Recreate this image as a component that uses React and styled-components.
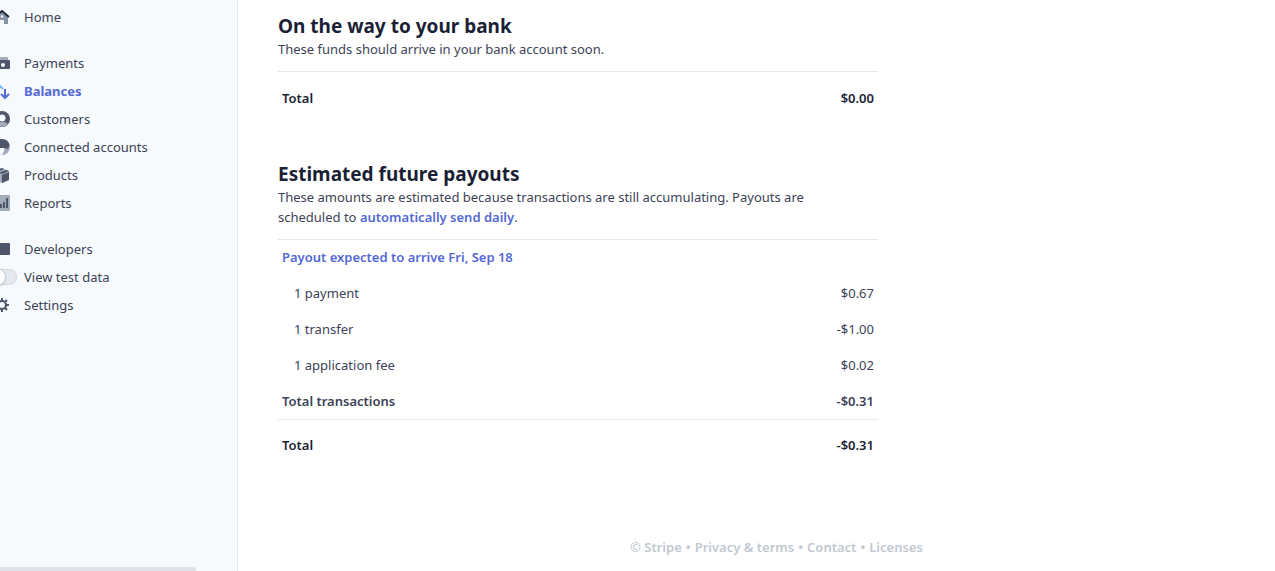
import React from "react";
import styled, { createGlobalStyle } from "styled-components";

const GlobalStyle = createGlobalStyle`
  *, *::before, *::after { box-sizing: border-box; }
  body {
    margin: 0;
    background: #fff;
    color: #3c4257;
    font: 400 13px/20px "Segoe UI", "Noto Sans", "Open Sans", sans-serif;
  }
`;

const Page = styled.div`
  display: flex;
  min-height: 100vh;
  overflow: hidden;
`;

const Sidebar = styled.aside`
  flex: 0 0 238px;
  padding: 3px 0;
  overflow: hidden;
  background: #f7fafc;
  border-right: 1px solid #e3e8ee;
`;

const NavGroup = styled.ul`
  list-style: none;
  margin: 0 0 18px -6px;
  padding: 0;
`;

const NavLink = styled.a`
  display: flex;
  align-items: center;
  gap: 14px;
  height: 28px;
  color: ${(p) => (p.$active ? "#5469d4" : "#3c4257")};
  font-weight: ${(p) => (p.$active ? 700 : 400)};
  text-decoration: none;
`;

const NavToggle = styled.label`
  display: flex;
  align-items: center;
  gap: 7px;
  height: 28px;
  cursor: pointer;
`;

const Switch = styled.input`
  appearance: none;
  display: flex;
  width: 28px;
  height: 16px;
  margin: 0 0 0 -5px;
  border-radius: 8px;
  background: #e3e8ee;
  box-shadow: inset 0 0 0 1px #d5dbe1;
  &::before {
    content: "";
    width: 16px;
    height: 16px;
    border-radius: 50%;
    background: #fff;
    box-shadow: 0 0 0 1px #c1c9d2, 0 2px 3px rgba(60, 66, 87, 0.15);
  }
  &:checked { justify-content: flex-end; background: #5469d4; }
`;

const Icon = styled.svg`
  flex: none;
  width: 16px;
  height: 16px;
`;

const Main = styled.main`
  flex: 1;
  min-width: 0;
  padding: 13px 0 14px 40px;
`;

const Section = styled.section`
  max-width: 600px;
  margin-bottom: 37px;
`;

const Title = styled.h2`
  margin: 0;
  color: #1a1f36;
  font-size: 19px;
  font-weight: 700;
  line-height: 26px;
`;

const Description = styled.p`
  max-width: 560px;
  margin: 0 0 12px;
`;

const TextLink = styled.a`
  color: #5469d4;
  font-weight: 600;
  text-decoration: none;
`;

const Table = styled.table`
  width: 100%;
  border-collapse: collapse;
`;

const Row = styled.tr`
  height: ${(p) => (p.$total ? 52 : 36)}px;
  border-top: ${(p) => (p.$ruled ? "1px solid #e3e8ee" : "0")};
  color: ${(p) => (p.$total ? "#1a1f36" : "#3c4257")};
`;

const Label = styled.th`
  padding: 0 4px 0 ${(p) => (p.$nested ? 16 : 4)}px;
  font-weight: ${(p) => (p.$nested ? 400 : 600)};
  text-align: left;
`;

const Amount = styled.td`
  padding: 0 4px;
  font-weight: ${(p) => (p.$strong ? 600 : 400)};
  text-align: right;
`;

const Footer = styled.footer`
  display: flex;
  flex-wrap: wrap;
  justify-content: center;
  gap: 4px;
  margin-top: 66px;
  color: #c1c9d2;
  font-weight: 600;
`;

const FooterLink = styled.a`
  color: inherit;
  text-decoration: none;
`;

const StatusBar = styled.div`
  position: fixed;
  left: 0;
  bottom: 0;
  width: 196px;
  height: 4px;
  border-radius: 0 4px 0 0;
  background: #dee1e6;
`;

const DARK = "#4f566b";
const LIGHT = "#a3acb9";
const PALE = "#f7fafc";

const drawings = {
  home: (
    <>
      <path d="M2 8 8 3l6 5v7h-4v-4H6v4H2z" fill="#8792a2" />
      <circle cx="8" cy="7.500" r="1.200" fill={PALE} />
      <path d="M1 8 8 2l7 6" fill="none" stroke="#1a1f36" strokeWidth="1.800" />
    </>
  ),
  payments: (
    <>
      <path d="M0 3a1 1 0 0 1 1-1h12a1 1 0 0 1 1 1v2H0z" fill={LIGHT} />
      <rect x="2" y="5" width="14" height="9" rx="1" fill={DARK} />
      <circle cx="9" cy="10" r="2" fill={PALE} />
    </>
  ),
  balances: (
    <g fill="none" strokeWidth="2">
      <path d="M5 11V2M1 6l4-4 4 4" stroke="#7fb5fb" />
      <path d="M11 6v9M7 11l4 4 4-4" stroke="#5469d4" />
    </g>
  ),
  customers: (
    <>
      <circle cx="8" cy="8" r="8" fill={DARK} />
      <path d="M2 13C4 11 6 11 8 11s4 0 6 2A8 8 0 0 1 2 13z" fill={LIGHT} />
      <circle cx="8" cy="7" r="3.500" fill={PALE} />
    </>
  ),
  connected: (
    <>
      <circle cx="8" cy="8" r="8" fill={LIGHT} />
      <path d="M6 0h2a8 8 0 0 1 7.500 6L14 10l-3-1H6z" fill={DARK} />
      <path d="M1 9h9v3l-2 4A8 8 0 0 1 1 9z" fill={PALE} />
    </>
  ),
  products: (
    <>
      <path d="M1 4l7-3 7 3v9l-7 3-7-3z" fill={LIGHT} />
      <path d="M1 4l7-3 2 1-7 3zM5 6l7-3 3 1-7 3z" fill={DARK} />
      <path d="M8 8l7-3v8l-7 3z" fill={DARK} />
    </>
  ),
  reports: (
    <>
      <rect width="16" height="16" rx="1" fill={LIGHT} />
      <path d="M3 11h2v2H3zM6 9h2v4H6zM9 7h2v6H9zM12 3h2v10h-2z" fill={DARK} />
    </>
  ),
  developers: (
    <>
      <rect y="2" width="16" height="12" rx="1" fill={DARK} />
      <path d="M3 4l3 2-3 2" fill="none" stroke={LIGHT} />
    </>
  ),
  settings: (
    <g fill="none" stroke={DARK}>
      <circle cx="8" cy="8" r="4" strokeWidth="2.200" />
      <path
        d="M8 1v3M8 12v3M1 8h3M12 8h3M3 3l2 2M11 11l2 2M3 13l2-2M11 5l2-2"
        strokeWidth="2"
      />
    </g>
  ),
};

function NavItem({ icon, active, children }) {
  return (
    <li>
      <NavLink href="#" $active={active} aria-current={active ? "page" : undefined}>
        <Icon viewBox="0 0 16 16" aria-hidden="true">{drawings[icon]}</Icon>
        {children}
      </NavLink>
    </li>
  );
}

function DataRow({ label, amount, total, ruled, nested }) {
  return (
    <Row $total={total} $ruled={ruled}>
      <Label scope="row" $nested={nested}>{label}</Label>
      <Amount $strong={!nested}>{amount}</Amount>
    </Row>
  );
}

export default function App() {
  return (
    <Page>
      <GlobalStyle />
      <Sidebar>
        <nav aria-label="Dashboard">
          <NavGroup>
            <NavItem icon="home">Home</NavItem>
          </NavGroup>
          <NavGroup>
            <NavItem icon="payments">Payments</NavItem>
            <NavItem icon="balances" active>Balances</NavItem>
            <NavItem icon="customers">Customers</NavItem>
            <NavItem icon="connected">Connected accounts</NavItem>
            <NavItem icon="products">Products</NavItem>
            <NavItem icon="reports">Reports</NavItem>
          </NavGroup>
          <NavGroup>
            <NavItem icon="developers">Developers</NavItem>
            <li>
              <NavToggle>
                <Switch type="checkbox" />
                View test data
              </NavToggle>
            </li>
            <NavItem icon="settings">Settings</NavItem>
          </NavGroup>
        </nav>
      </Sidebar>
      <Main>
        <Section>
          <Title>On the way to your bank</Title>
          <Description>These funds should arrive in your bank account soon.</Description>
          <Table>
            <tbody>
              <DataRow label="Total" amount="$0.00" total ruled />
            </tbody>
          </Table>
        </Section>
        <Section>
          <Title>Estimated future payouts</Title>
          <Description>
            These amounts are estimated because transactions are still accumulating. Payouts are
            scheduled to <TextLink href="#">automatically send daily</TextLink>.
          </Description>
          <Table>
            <tbody>
              <Row $ruled>
                <Label colSpan={2} scope="colgroup">
                  <TextLink href="#">Payout expected to arrive Fri, Sep 18</TextLink>
                </Label>
              </Row>
              <DataRow label="1 payment" amount="$0.67" nested />
              <DataRow label="1 transfer" amount="-$1.00" nested />
              <DataRow label="1 application fee" amount="$0.02" nested />
              <DataRow label="Total transactions" amount="-$0.31" />
              <DataRow label="Total" amount="-$0.31" total ruled />
            </tbody>
          </Table>
        </Section>
        <Footer>
          <span>© Stripe</span>
          <span>•</span>
          <FooterLink href="#">Privacy &amp; terms</FooterLink>
          <span>•</span>
          <FooterLink href="#">Contact</FooterLink>
          <span>•</span>
          <FooterLink href="#">Licenses</FooterLink>
        </Footer>
      </Main>
      <StatusBar />
    </Page>
  );
}
